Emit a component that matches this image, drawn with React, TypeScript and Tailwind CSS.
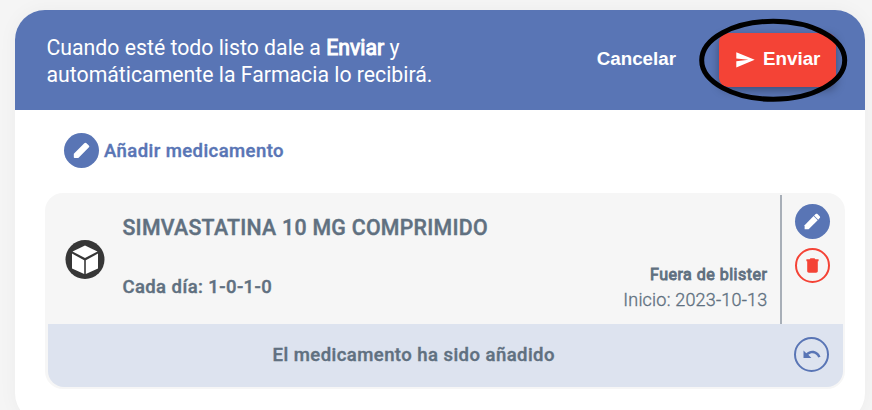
import type { ReactNode } from "react";

function Pencil({ rounded = false }: { rounded?: boolean }) {
  return (
    <svg viewBox="0 0 17 17" className="size-[17px] fill-white" aria-hidden="true">
      {rounded ? (
        <path d="M.8 12.100v3.200c0 .5.300.8.8.8h3.200c.3 0 .6-.1.800-.3L15.700 5.600c.8-.8.8-1.500.1-2.200L13.500 1.200c-.7-.7-1.400-.7-2.200.1L1.100 11.400c-.2.2-.3.400-.3.700z" />
      ) : (
        <>
          <path d="M.6 12.200v4h4L13.700 7.200 9.600 3.100z" />
          <path d="M10.100 2.600l1.600-1.500c.6-.6 1.200-.6 1.800 0l2.200 2.200c.6.6.6 1.200 0 1.800l-1.500 1.600z" />
        </>
      )}
    </svg>
  );
}

function RoundButton({ className, label, children }: { className: string; label: string; children: ReactNode }) {
  return (
    <button aria-label={label} className={`flex size-[35px] shrink-0 items-center justify-center rounded-full ${className}`}>
      {children}
    </button>
  );
}

function PackageIcon() {
  return (
    <svg viewBox="0 0 40 40" className="size-10" aria-hidden="true">
      <circle cx="20" cy="19.5" r="19.5" fill="#373737" />
      <path d="M20 5.600 32.500 11.500 20 18 7.500 11.500z" fill="#fff" />
      <path d="M7 13.600 19.200 20.200V34L7 28.500zM33 13.600 20.800 20.200V34L33 28.500z" fill="#fff" />
    </svg>
  );
}

export default function App() {
  return (
    <div className="h-[410px] w-[872px] overflow-hidden bg-[#f5f5f5] pt-[10px] pl-[15px] font-['Roboto',sans-serif] text-[#607080]">
      <main className="h-[413px] w-[850px] overflow-hidden rounded-[30px] bg-white shadow-[0_0_20px_rgba(0,0,0,0.04)]">
        <header className="flex h-[100px] items-center bg-[#5975b5] pr-[29px] pl-[31.5px] text-white">
          <p className="pt-[1px] text-[21.25px] leading-[27px] whitespace-nowrap">
            Cuando esté todo listo dale a <span className="[-webkit-text-stroke:1px_white]">Enviar</span> y
            <br />
            automáticamente la Farmacia lo recibirá.
          </p>
          <button className="ml-auto pb-px font-['Liberation_Sans',sans-serif] text-[18.8px] font-bold">Cancelar</button>
          <div className="relative ml-[43px]">
            <button className="flex h-[54px] w-[117px] items-center rounded-[9px] bg-[#f44336] pb-px pl-[17px] font-['Liberation_Sans',sans-serif] text-[18.8px] font-bold shadow-[0_3px_10px_rgba(0,0,0,0.35)]">
              <svg viewBox="0 0 19 16" className="mr-[8px] h-[16px] w-[19px] fill-white" aria-hidden="true">
                <path d="M.3.3 18.700 7.800.3 15.400V9.300L12.500 7.800.3 6.400z" />
              </svg>
              Enviar
            </button>
            <svg viewBox="0 0 150 86" className="pointer-events-none absolute -top-[16px] -left-[21px] h-[86px] w-[150px]" fill="none">
              <ellipse cx="75.200" cy="43.300" rx="71.500" ry="39" stroke="#000" strokeWidth="5" />
            </svg>
          </div>
        </header>

        <div className="px-[30px] pt-[23px]">
          <div className="flex items-center pl-[19px]">
            <RoundButton label="Añadir" className="bg-[#5975b5]">
              <Pencil rounded />
            </RoundButton>
            <span className="ml-[5px] pt-[2px] text-[18.5px] font-medium tracking-[0.43px] text-[#5975b5] [-webkit-text-stroke:0.4px_#5975b5]">Añadir medicamento</span>
          </div>

          <article className="mt-[25px] h-[196px] w-[800px] rounded-[18px] bg-[#f6f6f6] py-[2px] pr-[2px] pl-[3px]">
            <div className="flex h-[129px]">
              <div className="flex w-[74px] items-center pl-[17px]">
                <PackageIcon />
              </div>
              <div className="flex flex-1 flex-col pl-[0.4px] font-medium [-webkit-text-stroke:0.4px_#607080]">
                <h2 className="mt-[19px] text-[21.3px] leading-[28px] tracking-[0.28px] whitespace-nowrap">SIMVASTATINA 10 MG COMPRIMIDO</h2>
                <p className="mt-[33px] text-[18.5px] leading-[24px] tracking-[0.42px]">Cada día: 1-0-1-0</p>
              </div>
              <div className="flex flex-col justify-end pr-[12.6px] pb-[11px] text-right whitespace-nowrap">
                <p className="text-[16px] leading-[25px] tracking-[0.5px] [-webkit-text-stroke:0.9px_#607080]">Fuera de blister</p>
                <p className="text-[18px] leading-[26px] font-light tracking-[0.2px] [-webkit-text-stroke:0.35px_#607080]">Inicio: 2023-10-13</p>
              </div>
              <div className="flex w-[63px] flex-col items-center gap-[9px] border-l-2 border-[#a8afb8] pt-[9px]">
                <RoundButton label="Editar" className="bg-[#5975b5]">
                  <Pencil />
                </RoundButton>
                <RoundButton label="Eliminar" className="border-2 border-[#f44336]">
                  <svg viewBox="0 0 13 15" className="mr-px h-[15px] w-[13px] fill-[#f44336]" aria-hidden="true">
                    <path d="M1.200 3.200h10.600v9.900c0 1-.7 1.700-1.700 1.700H2.900c-1 0-1.700-.7-1.700-1.700zM.4 1.200h3.200L4.500.3h4l.9.9h3.200v2.100H.4z" />
                  </svg>
                </RoundButton>
              </div>
            </div>
            <div className="flex h-[63px] w-[795px] items-center rounded-b-[16px] bg-[#dde3ef] pr-[14px] pb-[2px]">
              <p className="flex-1 pt-[2px] pl-[224.6px] text-[18.5px] font-medium tracking-[0.45px] whitespace-nowrap [-webkit-text-stroke:0.4px_#607080]">El medicamento ha sido añadido</p>
              <RoundButton label="Deshacer" className="border-2 border-[#5975b5]">
                <svg viewBox="0 0 18 9" className="h-[9px] w-[18px] fill-[#5975b5]" aria-hidden="true">
                  <path d="M.5.5 3.300 3.200C5 1.700 7 .8 9.300.8c3.800 0 7 2.500 8.200 6l-2.300.8C14.300 5 12 3.200 9.300 3.200c-1.500 0-2.900.6-4 1.500L8.400 8H.5z" />
                </svg>
              </RoundButton>
            </div>
          </article>
        </div>
      </main>
    </div>
  );
}
